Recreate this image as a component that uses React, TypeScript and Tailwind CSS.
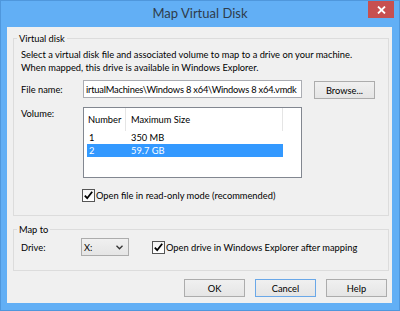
import React from "react";

function Check() {
  return (
    <div className="w-[13px] h-[13px] border border-[#555] bg-gradient-to-b from-[#f4f4f4] to-white flex items-center justify-center">
      <svg width="11" height="11" viewBox="0 0 11 11">
        <path d="M1.8 5.6 L4.2 8.2 L9.2 1.8" fill="none" stroke="#000" strokeWidth="1.8" />
      </svg>
    </div>
  );
}

function Btn({ label, focus }: { label: string; focus?: boolean }) {
  return (
    <div
      className={
        "w-[61px] h-[18px] flex items-center justify-center border bg-gradient-to-b from-[#f0f0f0] to-[#e5e5e5] " +
        (focus ? "border-[#6aa8e8]" : "border-[#acacac]")
      }
    >
      {label}
    </div>
  );
}

export default function App() {
  return (
    <div className="w-[400px] h-[311px] bg-[#62aff5] border border-[#4f97dc] flex flex-col font-[family-name:Lato,sans-serif] text-[9.3px] leading-[13px] text-black">
      <div className="relative h-[26px] flex items-center justify-center pb-[2px]">
        <span className="text-[13px] leading-[16px] text-[#2f3c4b]">Map Virtual Disk</span>
        <div className="absolute top-0 right-[5px] w-[26px] h-[17px] bg-[#c75050] flex items-center justify-center">
          <svg width="9" height="8" viewBox="0 0 9 8">
            <path d="M1 0.5 L8 7.5 M8 0.5 L1 7.5" stroke="#fff" strokeWidth="1.8" />
          </svg>
        </div>
      </div>
      <div className="ml-[6px] mr-[7px] mb-[7px] flex-1 bg-[#f0f0f0] flex flex-col">
        <fieldset className="ml-[6px] mr-[3px] mt-[5px] border border-[#dcdcdc] min-w-0">
          <legend className="ml-[3px] px-[2px]">Virtual disk</legend>
          <div className="pl-[7px] pt-[3px] pb-[13px] flex flex-col">
            <div>Select a virtual disk file and associated volume to map to a drive on your machine.</div>
            <div>When mapped, this drive is available in Windows Explorer.</div>
            <div className="mt-[6px] flex items-center h-[18px]">
              <div className="w-[62px]">File name:</div>
              <div className="w-[219px] h-[18px] border border-[#abadb3] bg-white pl-[2px] flex items-center overflow-hidden whitespace-nowrap tracking-[-0.2px]">
                irtualMachines\Windows 8 x64\Windows 8 x64.vmdk
              </div>
              <div className="ml-[12px] mt-[2px]">
                <Btn label="Browse..." />
              </div>
            </div>
            <div className="mt-[9px] flex items-start">
              <div className="w-[62px]">Volume:</div>
              <div className="w-[219px] h-[71px] border border-[#828790] bg-white flex flex-col">
                <div className="h-[23px] flex">
                  <div className="w-[42px] pl-[4px] flex items-center border-r border-[#e5e5e5]">Number</div>
                  <div className="w-[157px] pl-[5px] flex items-center border-r border-[#e5e5e5]">Maximum Size</div>
                </div>
                <div className="ml-[3px] w-[196px] h-[13px] flex items-center">
                  <div className="w-[39px] pl-[2px]">1</div>
                  <div className="pl-[5px]">350 MB</div>
                </div>
                <div className="ml-[3px] w-[196px] h-[13px] flex items-center bg-[#3399ff] text-white">
                  <div className="w-[39px] pl-[2px]">2</div>
                  <div className="pl-[5px]">59.7 GB</div>
                </div>
              </div>
            </div>
            <div className="mt-[11px] ml-[61px] flex items-center h-[13px]">
              <Check />
              <span className="ml-[1px]">Open file in read-only mode (recommended)</span>
            </div>
          </div>
        </fieldset>
        <fieldset className="ml-[6px] mr-[3px] mt-[7px] border border-[#dcdcdc] min-w-0">
          <legend className="ml-[3px] px-[2px]">Map to</legend>
          <div className="pl-[7px] pt-[2px] pb-[14px] flex items-center">
            <div className="w-[60px]">Drive:</div>
            <div className="w-[48px] h-[18px] border border-[#acacac] bg-gradient-to-b from-[#f0f0f0] to-[#e5e5e5] flex items-center justify-between pl-[2px] pr-[5px]">
              <span>X:</span>
              <svg width="7" height="5" viewBox="0 0 7 5">
                <path d="M0.5 0.8 L3.5 3.8 L6.5 0.8" fill="none" stroke="#333" strokeWidth="1.3" />
              </svg>
            </div>
            <div className="ml-[23px] flex items-center">
              <Check />
              <span className="ml-[1px]">Open drive in Windows Explorer after mapping</span>
            </div>
          </div>
        </fieldset>
        <div className="mt-[8px] pr-[5px] flex justify-end gap-[10px]">
          <Btn label="OK" />
          <Btn label="Cancel" focus />
          <Btn label="Help" />
        </div>
      </div>
    </div>
  );
}
